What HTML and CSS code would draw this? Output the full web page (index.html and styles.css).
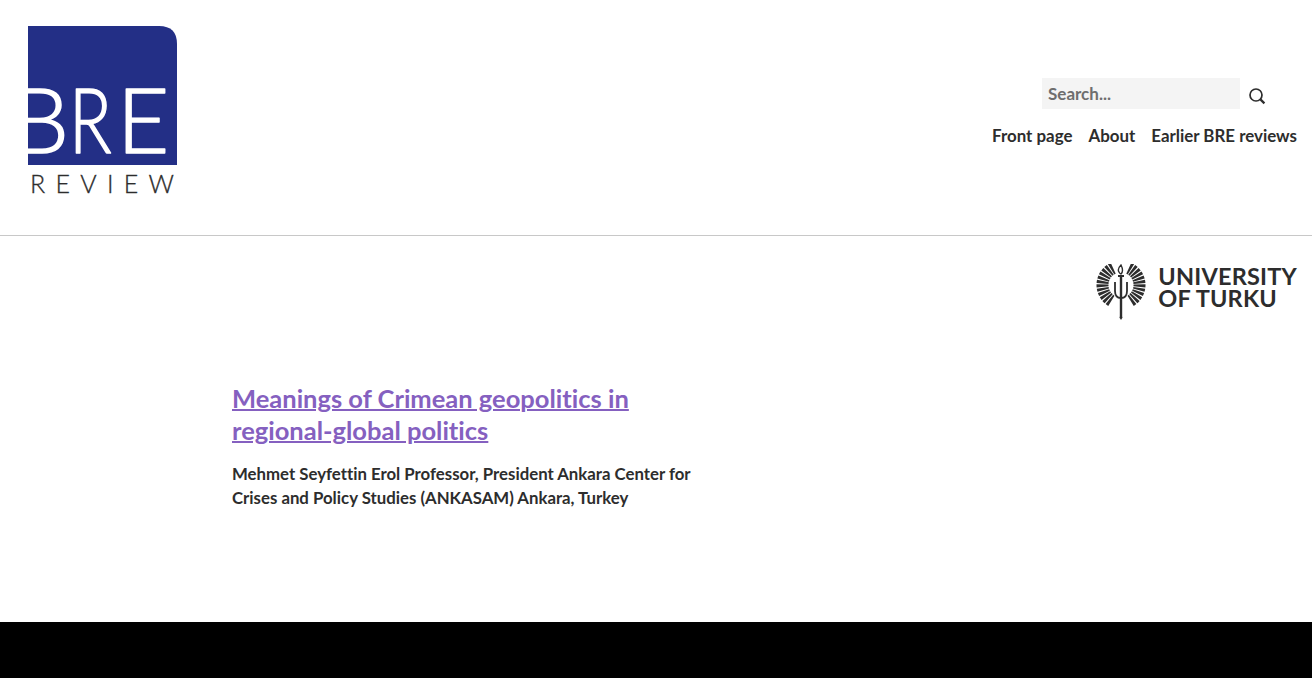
FILE: index.html
```html
<!DOCTYPE html>
<html lang="en">
<head>
    <meta charset="UTF-8">
    <meta name="viewport" content="width=device-width, initial-scale=1.0">
    <title>BRE Review</title>
    <link rel="stylesheet" href="styles.css">
</head>
<body>
    <div class="page">
        <header class="site-header">
            <a class="brand" href="#" aria-label="BRE Review">
                <svg width="165" height="171" viewBox="0 0 165 171">
                    <path d="M0 0H131Q149 0 149 18V139H0Z" fill="#232f86"/>
                    <text class="brand-big" x="-16" y="126.5">B</text>
                    <text class="brand-big" transform="translate(41 126.5) scale(.78 1)">R</text>
                    <text class="brand-big" x="89" y="126.5">E</text>
                    <text class="brand-small" x="2" y="167">REVIEW</text>
                </svg>
            </a>
            <div class="header-tools">
                <form class="search">
                    <input class="search-input" type="text" placeholder="Search...">
                    <button class="search-btn" type="button" aria-label="Search">
                        <svg width="18" height="18" viewBox="0 0 18 18" fill="none" stroke="#2d2d2d">
                            <circle cx="8" cy="8" r="6" stroke-width="1.7"/>
                            <path d="M12.4 12.4L16.4 16.4" stroke-width="2.2"/>
                        </svg>
                    </button>
                </form>
                <nav class="main-nav">
                    <a href="#">Front page</a>
                    <a href="#">About</a>
                    <a href="#">Earlier BRE reviews</a>
                </nav>
            </div>
        </header>

        <main class="content">
            <div class="partner">
                <svg width="50" height="56" viewBox="0 0 50 56" fill="none" stroke="#2d2d2d">
                    <!-- wings -->
                    <path d="M17.2 4.2A18.5 18.5 0 0 0 15.75 37" stroke-width="12" stroke-dasharray="2.4 1"/>
                    <path d="M32.8 4.2A18.5 18.5 0 0 1 34.25 37" stroke-width="12" stroke-dasharray="2.4 1"/>
                    <!-- trident and torch -->
                    <path d="M25 12V53" stroke-width="2.4"/>
                    <path d="M25 51L26.6 53.5L25 56L23.4 53.5Z" fill="#2d2d2d" stroke="none"/>
                    <path d="M19 18V27Q19 34 25 34Q31 34 31 27V18" stroke-width="1.8"/>
                    <path d="M25 1Q21 5 23 8Q24 10 25 10Q28 7 25 1Z" stroke-width="1.4"/>
                    <path d="M22 12H28" stroke-width="2"/>
                </svg>
                <div class="partner-name">UNIVERSITY<br>OF TURKU</div>
            </div>

            <article class="article">
                <h2 class="article-title"><a href="#">Meanings of Crimean geopolitics in regional-global politics</a></h2>
                <p class="article-authors">Mehmet Seyfettin Erol Professor, President Ankara Center for Crises and Policy Studies (ANKASAM) Ankara, Turkey</p>
            </article>
        </main>

        <footer class="site-footer"></footer>
    </div>
</body>
</html>
```

FILE: styles.css
```css
* { box-sizing: border-box; }
body { margin: 0; font-family: "Lato", "Liberation Sans", sans-serif; font-variant-ligatures: none; color: #2d2d2d; background: #fff; }
a { color: inherit; text-decoration: none; }
.page { min-height: 678px; display: flex; flex-direction: column; }

.site-header { height: 236px; border-bottom: 1px solid #c8c8c8; padding: 26px 15px 0 28px; display: flex; justify-content: space-between; }
.brand { display: block; height: 171px; }
.brand svg { display: block; }
.brand-big { font-family: "Lato", sans-serif; font-weight: 300; font-size: 90px; fill: #fff; stroke: #fff; stroke-width: 1.6px; stroke-linejoin: round; }
.brand-small { font-family: "Lato", sans-serif; font-weight: 300; font-size: 25px; fill: #2d2d2d; stroke: #2d2d2d; stroke-width: 0.3px; letter-spacing: 10.3px; }

.header-tools { display: flex; flex-direction: column; align-items: flex-end; padding-top: 52px; }
.search { display: flex; align-items: center; margin-right: 31px; }
.search-input { width: 198px; height: 31px; border: 0; background: #f4f4f4; padding: 0 6px; font: 700 17px "Lato", sans-serif; color: #2d2d2d; }
.search-input::placeholder { color: #6e6e6e; opacity: 1; }
.search-btn { border: 0; background: none; padding: 0; margin: 4px 0 0 8px; width: 18px; height: 18px; }
.search-btn svg { display: block; }
.main-nav { display: flex; gap: 16px; margin-top: 15px; font-size: 16.9px; font-weight: 700; line-height: 24px; }

.content { flex: 1; padding: 28px 15px 0 232px; }
.partner { display: flex; justify-content: flex-end; align-items: flex-start; gap: 12px; height: 56px; }
.partner-name { font-weight: 700; font-size: 23.5px; line-height: 22px; letter-spacing: 0.2px; padding-top: 1px; }

.article { width: 480px; margin-top: 62px; }
.article-title { margin: 0; font-size: 25.5px; line-height: 32px; font-weight: 700; color: #8560c0; }
.article-title a { text-decoration: underline; text-decoration-thickness: 2px; }
.article-authors { margin: 16px 0 0; font-size: 16.8px; line-height: 24px; font-weight: 700; }

.site-footer { height: 56px; background: #000; }
```
